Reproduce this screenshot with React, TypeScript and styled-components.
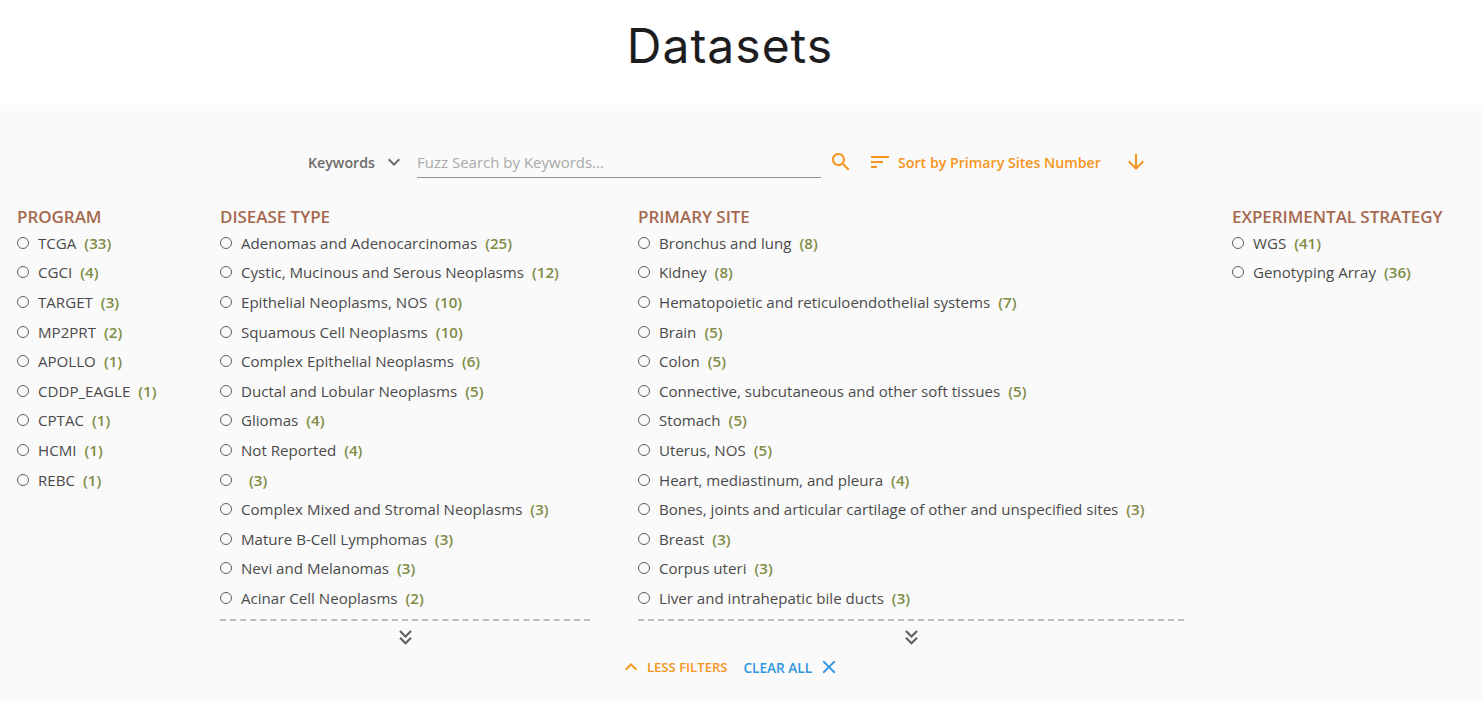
import React from 'react';
import styled, { createGlobalStyle } from 'styled-components';

interface IFacetItem {
  name: string;
  count: number;
}

interface IFacet {
  title: string;
  width: number;
  more: boolean;
  items: IFacetItem[];
}

const toItems = (list: [string, number][]): IFacetItem[] =>
  list.map(([name, count]) => ({ name, count }));

const facets: IFacet[] = [
  {
    title: 'PROGRAM',
    width: 155,
    more: false,
    items: toItems([
      ['TCGA', 33],
      ['CGCI', 4],
      ['TARGET', 3],
      ['MP2PRT', 2],
      ['APOLLO', 1],
      ['CDDP_EAGLE', 1],
      ['CPTAC', 1],
      ['HCMI', 1],
      ['REBC', 1],
    ]),
  },
  {
    title: 'DISEASE TYPE',
    width: 370,
    more: true,
    items: toItems([
      ['Adenomas and Adenocarcinomas', 25],
      ['Cystic, Mucinous and Serous Neoplasms', 12],
      ['Epithelial Neoplasms, NOS', 10],
      ['Squamous Cell Neoplasms', 10],
      ['Complex Epithelial Neoplasms', 6],
      ['Ductal and Lobular Neoplasms', 5],
      ['Gliomas', 4],
      ['Not Reported', 4],
      ['', 3],
      ['Complex Mixed and Stromal Neoplasms', 3],
      ['Mature B-Cell Lymphomas', 3],
      ['Nevi and Melanomas', 3],
      ['Acinar Cell Neoplasms', 2],
    ]),
  },
  {
    title: 'PRIMARY SITE',
    width: 546,
    more: true,
    items: toItems([
      ['Bronchus and lung', 8],
      ['Kidney', 8],
      ['Hematopoietic and reticuloendothelial systems', 7],
      ['Brain', 5],
      ['Colon', 5],
      ['Connective, subcutaneous and other soft tissues', 5],
      ['Stomach', 5],
      ['Uterus, NOS', 5],
      ['Heart, mediastinum, and pleura', 4],
      ['Bones, joints and articular cartilage of other and unspecified sites', 3],
      ['Breast', 3],
      ['Corpus uteri', 3],
      ['Liver and intrahepatic bile ducts', 3],
    ]),
  },
  {
    title: 'EXPERIMENTAL STRATEGY',
    width: 220,
    more: false,
    items: toItems([
      ['WGS', 41],
      ['Genotyping Array', 36],
    ]),
  },
];

// material style icons, the lucide ones are too thin and round here
function Icon({ d, size = 24 }: { d: string; size?: number }) {
  return (
    <svg width={size} height={size} viewBox="0 0 24 24" fill="currentColor">
      <path d={d} />
    </svg>
  );
}

const ICON_EXPAND = 'M16.59 8.59L12 13.17 7.41 8.59 6 10l6 6 6-6z';
const ICON_COLLAPSE = 'M12 8l-6 6 1.41 1.41L12 10.83l4.59 4.58L18 14z';
const ICON_SEARCH =
  'M15.5 14h-.79l-.28-.27C15.41 12.59 16 11.11 16 9.5 16 5.91 13.09 3 9.5 3S3 5.91 3 9.5 5.91 16 9.5 16c1.61 0 3.09-.59 4.23-1.57l.27.28v.79l5 4.99L20.49 19l-4.99-5zm-6 0C7.01 14 5 11.99 5 9.5S7.01 5 9.5 5 14 7.01 14 9.5 11.99 14 9.5 14z';
const ICON_SORT = 'M3 18h6v-2H3v2zM3 6v2h18V6H3zm0 7h12v-2H3v2z';
const ICON_ARROW = 'M20 12l-1.41-1.41L13 16.17V4h-2v12.17l-5.58-5.59L4 12l8 8 8-8z';
const ICON_DOUBLE =
  'M18 6.41L16.59 5 12 9.58 7.41 5 6 6.41l6 6zM18 13l-1.41-1.41L12 16.17l-4.59-4.58L6 13l6 6z';
const ICON_CLOSE =
  'M19 6.41L17.59 5 12 10.59 6.41 5 5 6.41 10.59 12 5 17.59 6.41 19 12 13.41 17.59 19 19 17.59 13.41 12z';

export default function App() {
  return (
    <Page>
      <GlobalStyle />
      <Title>Datasets</Title>
      <Panel>
        <Toolbar>
          <FieldSelect>
            Keywords
            <Icon d={ICON_EXPAND} />
          </FieldSelect>
          <SearchInput placeholder="Fuzz Search by Keywords..." readOnly />
          <SearchButton>
            <Icon d={ICON_SEARCH} />
          </SearchButton>
          <SortLabel>
            <Icon d={ICON_SORT} />
            Sort by Primary Sites Number
          </SortLabel>
          <SortArrow>
            <Icon d={ICON_ARROW} />
          </SortArrow>
        </Toolbar>
        <Facets>
          {facets.map((facet: IFacet) => (
            <Facet key={facet.title} $width={facet.width}>
              <FacetTitle>{facet.title}</FacetTitle>
              <FacetList>
                {facet.items.map((item: IFacetItem, index: number) => (
                  <FacetRow key={index}>
                    <Radio />
                    <RowName>{item.name}</RowName>
                    <RowCount>({item.count})</RowCount>
                  </FacetRow>
                ))}
              </FacetList>
              {facet.more ? (
                <MoreBar>
                  <Icon d={ICON_DOUBLE} size={25} />
                </MoreBar>
              ) : null}
            </Facet>
          ))}
        </Facets>
        <FilterActions>
          <LessFilters>
            <Icon d={ICON_COLLAPSE} />
            LESS FILTERS
          </LessFilters>
          <ClearAll>
            CLEAR ALL
            <Icon d={ICON_CLOSE} size={22} />
          </ClearAll>
        </FilterActions>
      </Panel>
    </Page>
  );
}

const GlobalStyle = createGlobalStyle`
  html, body {
    margin: 0;
    padding: 0;
    background: #fff;
  }
  body {
    font-family: 'Open Sans', 'Noto Sans', sans-serif;
  }
`;

const Page = styled.div`
  width: 100%;
  height: 710px;
  overflow: hidden;
`;

const Title = styled.h1`
  margin: 0;
  height: 105px;
  padding-right: 23px;
  line-height: 92px;
  text-align: center;
  font-family: 'Inter', sans-serif;
  font-size: 48px;
  font-weight: 400;
  letter-spacing: 1px;
  color: #1d1d1f;
`;

const Panel = styled.div`
  height: 596px;
  padding-top: 41px;
  box-sizing: border-box;
  background: #fafafa;
`;

const Toolbar = styled.div`
  display: flex;
  align-items: center;
  height: 32px;
  padding-left: 308px;
`;

const FieldSelect = styled.div`
  display: flex;
  align-items: center;
  gap: 7px;
  width: 109px;
  font-size: 14.2px;
  font-weight: 600;
  color: #6b6b6b;
`;

const SearchInput = styled.input`
  width: 404px;
  height: 30px;
  padding: 0;
  border: 0;
  border-bottom: 1px solid #8f8f8f;
  background: transparent;
  font-family: inherit;
  font-size: 15px;
  outline: none;
  &::placeholder {
    color: #a9a9a9;
  }
`;

const SearchButton = styled.div`
  display: flex;
  margin-left: 8px;
  color: #f7941d;
`;

const SortLabel = styled.div`
  display: flex;
  align-items: center;
  gap: 6px;
  margin-left: 15px;
  font-size: 14.2px;
  font-weight: 600;
  color: #f7941d;
`;

const SortArrow = styled.div`
  display: flex;
  margin-left: 23px;
  color: #f7941d;
`;

const Facets = styled.div`
  display: flex;
  gap: 48px;
  height: 449px;
  margin-top: 28px;
  padding-left: 17px;
`;

const Facet = styled.div<{ $width: number }>`
  width: ${(props) => props.$width}px;
  flex-shrink: 0;
`;

const FacetTitle = styled.div`
  height: 22.1px;
  line-height: 22px;
  font-size: 17px;
  font-weight: 600;
  letter-spacing: -0.05px;
  color: #a5694f;
`;

const FacetList = styled.div`
  display: flex;
  flex-direction: column;
`;

const FacetRow = styled.div`
  display: flex;
  align-items: center;
  height: 29.6px;
  font-size: 15.1px;
  white-space: nowrap;
`;

const Radio = styled.span`
  width: 10px;
  height: 10px;
  margin-right: 9px;
  border: 1.6px solid #5f5f5f;
  border-radius: 50%;
  flex-shrink: 0;
`;

const RowName = styled.span`
  color: #4a4a4a;
`;

const RowCount = styled.span`
  margin-left: 8px;
  font-weight: 600;
  color: #7f8c45;
`;

const MoreBar = styled.div`
  display: flex;
  justify-content: center;
  margin-top: 6px;
  padding-top: 4px;
  border-top: 2px dashed #bdbdbd;
  color: #616161;
`;

const FilterActions = styled.div`
  display: flex;
  align-items: center;
  justify-content: center;
  gap: 16px;
  padding-right: 24px;
`;

const LessFilters = styled.div`
  display: flex;
  align-items: center;
  gap: 4px;
  font-size: 13.1px;
  font-weight: 600;
  color: #f7941d;
`;

const ClearAll = styled.div`
  display: flex;
  align-items: center;
  gap: 6px;
  font-size: 13.6px;
  font-weight: 600;
  color: #2f96e0;
`;
